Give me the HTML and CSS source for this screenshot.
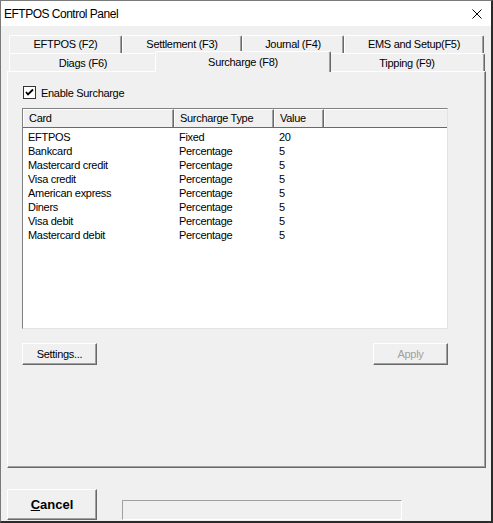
FILE: index.html
```html
<!DOCTYPE html>
<html lang="en">

<head>
    <meta charset="UTF-8">
    <title>EFTPOS Control Panel</title>
    <link rel="stylesheet" href="styles.css">
</head>

<body>
    <div class="window">
        <div class="titlebar">
            <span class="title">EFTPOS Control Panel</span>
            <svg class="close" width="10" height="10" viewBox="0 0 10 10">
                <path d="M0.5 0.5 L9.5 9.5 M9.5 0.5 L0.5 9.5" stroke="#000" stroke-width="1" fill="none" />
            </svg>
        </div>

        <div class="client">
            <div class="tabs">
                <div class="tab-row">
                    <div class="tab t-eftpos">EFTPOS (F2)</div>
                    <div class="tab t-settle">Settlement (F3)</div>
                    <div class="tab t-journal">Journal (F4)</div>
                    <div class="tab t-ems">EMS and Setup(F5)</div>
                </div>
                <div class="tab-row">
                    <div class="tab t-diags">Diags (F6)</div>
                    <div class="tab t-surcharge selected">Surcharge (F8)</div>
                    <div class="tab t-tipping">Tipping (F9)</div>
                </div>
            </div>

            <div class="panel">
                <label class="check">
                    <span class="box">
                        <svg width="11" height="11" viewBox="0 0 11 11">
                            <path d="M2 5 L4 7.5 L9 2.5" stroke="#000" stroke-width="1.8" fill="none" />
                        </svg>
                    </span>
                    Enable Surcharge
                </label>

                <div class="list">
                    <div class="list-head">
                        <div class="col c-card">Card</div>
                        <div class="col c-type">Surcharge Type</div>
                        <div class="col c-value">Value</div>
                        <div class="col c-fill"></div>
                    </div>
                    <div class="list-body">
                        <div class="row"><span class="c-card">EFTPOS</span><span class="c-type">Fixed</span><span class="c-value">20</span></div>
                        <div class="row"><span class="c-card">Bankcard</span><span class="c-type">Percentage</span><span class="c-value">5</span></div>
                        <div class="row"><span class="c-card">Mastercard credit</span><span class="c-type">Percentage</span><span class="c-value">5</span></div>
                        <div class="row"><span class="c-card">Visa credit</span><span class="c-type">Percentage</span><span class="c-value">5</span></div>
                        <div class="row"><span class="c-card">American express</span><span class="c-type">Percentage</span><span class="c-value">5</span></div>
                        <div class="row"><span class="c-card">Diners</span><span class="c-type">Percentage</span><span class="c-value">5</span></div>
                        <div class="row"><span class="c-card">Visa debit</span><span class="c-type">Percentage</span><span class="c-value">5</span></div>
                        <div class="row"><span class="c-card">Mastercard debit</span><span class="c-type">Percentage</span><span class="c-value">5</span></div>
                    </div>
                </div>

                <div class="actions">
                    <button class="btn">Settings...</button>
                    <button class="btn" disabled>Apply</button>
                </div>
            </div>

            <div class="footer">
                <button class="btn cancel"><u>C</u>ancel</button>
                <div class="status"></div>
            </div>
        </div>
    </div>
</body>

</html>
```

FILE: styles.css
```css
* {
    box-sizing: border-box;
}

body {
    margin: 0;
    background: #f0f0f0;
    font-family: "Liberation Sans", Arial, sans-serif;
    font-size: 11px;
    letter-spacing: -0.3px;
    color: #000;
}

.window {
    width: 493px;
    height: 523px;
    background: #f0f0f0;
    border-left: 1px solid #7a7a7a;
    border-top: 1px solid #7a7a7a;
    border-right: 2px solid #2b2b2b;
    border-bottom: 2px solid #2b2b2b;
    display: flex;
    flex-direction: column;
}

.titlebar {
    height: 25px;
    background: #fff;
    display: flex;
    align-items: center;
    justify-content: space-between;
    padding: 0 9px 0 3px;
}

.title {
    font-size: 12px;
    letter-spacing: -0.5px;
}

.client {
    padding: 9px 0 0 6px;
}

/* tabs */
.tabs {
    margin-left: 2px;
}

.tab-row {
    display: flex;
    height: 18px;
    align-items: flex-end;
}

.tab {
    height: 18px;
    line-height: 17px;
    text-align: center;
    border-top: 1px solid #fff;
    border-left: 1px solid #fff;
    border-right: 1px solid #696969;
    box-shadow: inset -1px 0 #a0a0a0;
    border-radius: 2px 2px 0 0;
    background: #f0f0f0;
}

.tab-row + .tab-row .tab {
    padding-top: 1px;
}

.t-eftpos { width: 113px; }
.t-settle { width: 120px; }
.t-journal { width: 102px; }
.t-ems { width: 140px; }
.t-diags { width: 148px; }
.t-surcharge { width: 172px; }
.t-tipping { width: 156px; }

.tab.selected {
    position: relative;
    z-index: 1;
    width: 176px;
    height: 21px;
    margin: 0 -2px -1px -2px;
    padding-top: 0;
    line-height: 18px;
}

/* page */
.panel {
    width: 479px;
    height: 397px;
    border-top: 1px solid #fff;
    border-left: 1px solid #fff;
    border-right: 1px solid #696969;
    border-bottom: 1px solid #696969;
    box-shadow: inset -1px -1px #a0a0a0;
    padding: 14px 0 0 14px;
}

.check {
    display: flex;
    align-items: center;
    gap: 5px;
    height: 13px;
    margin-left: 1px;
}

.box {
    width: 13px;
    height: 13px;
    background: #fff;
    border: 1px solid #333;
    display: flex;
    align-items: center;
    justify-content: center;
}

.list {
    margin-top: 9px;
    width: 426px;
    height: 221px;
    background: #fff;
    border-top: 1px solid #828282;
    border-left: 1px solid #828282;
    border-right: 1px solid #e3e3e3;
    border-bottom: 1px solid #e3e3e3;
}

.list-head {
    display: flex;
    height: 19px;
    background: #f0f0f0;
    border-bottom: 1px solid #696969;
}

.list-head .col {
    line-height: 17px;
    padding-left: 5px;
    border-top: 1px solid #fff;
    border-left: 1px solid #fff;
    border-right: 1px solid #696969;
    box-shadow: inset -1px 0 #a0a0a0;
}

.list-head .c-fill {
    flex: 1;
    border-right: none;
    box-shadow: none;
}

.c-card { width: 151px; }
.c-type { width: 100px; }
.c-value { width: 50px; }

.list-body {
    padding-top: 2px;
}

.row {
    display: flex;
    height: 14px;
    line-height: 14px;
}

.row span {
    padding-left: 5px;
}

/* buttons */
.actions {
    display: flex;
    justify-content: space-between;
    width: 426px;
    margin-top: 14px;
}

.btn {
    width: 75px;
    height: 22px;
    padding: 0;
    font: inherit;
    letter-spacing: -0.3px;
    color: #000;
    background: #f0f0f0;
    border: 1px solid;
    border-color: #fff #696969 #696969 #fff;
    box-shadow: inset -1px -1px #a0a0a0;
}

.btn:disabled {
    color: #a0a0a0;
}

.footer {
    display: flex;
    align-items: flex-start;
    margin-top: 21px;
    height: 32px;
}

.cancel {
    width: 90px;
    height: 31px;
    font-size: 13px;
    font-weight: bold;
    letter-spacing: 0;
}

.status {
    width: 280px;
    height: 20px;
    margin: 11px 0 0 25px;
    border-top: 1px solid #a0a0a0;
    border-left: 1px solid #a0a0a0;
    border-right: 1px solid #fff;
    border-bottom: 1px solid #fff;
}
```
